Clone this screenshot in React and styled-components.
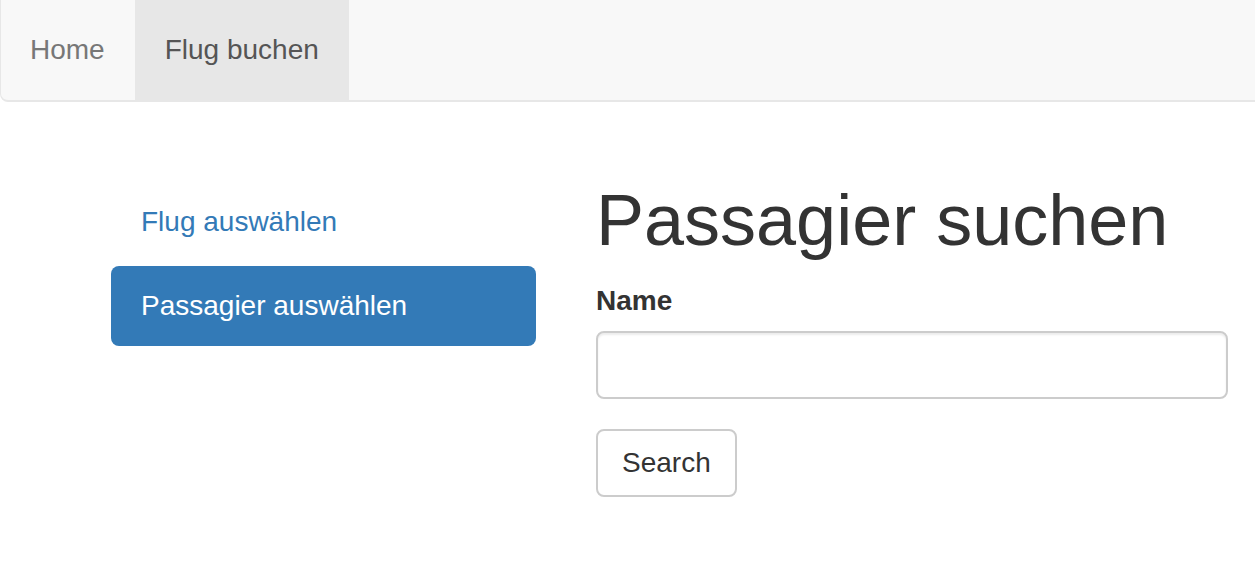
import React from "react";
import styled, { createGlobalStyle } from "styled-components";

const Global = createGlobalStyle`
  html, body { margin: 0; padding: 0; background: #fff; overflow-x: hidden; }
  body {
    font-family: "Liberation Sans", Arial, Helvetica, sans-serif;
    font-size: 28px;
    line-height: 40px;
    color: #333;
  }
  * { box-sizing: border-box; }
`;

const Navbar = styled.nav`
  display: flex;
  height: 102px;
  width: calc(100% + 12px);
  background: #f8f8f8;
  border: 2px solid #e7e7e7;
  border-top: none;
  border-left-width: 1px;
  border-radius: 0 0 8px 8px;
  margin-bottom: 40px;
`;

const NavItem = styled.a`
  display: block;
  padding: 30px 30px 30px;
  line-height: 40px;
  font-size: 28px;
  text-decoration: none;
  color: ${(p) => (p.$active ? "#555" : "#777")};
  background: ${(p) => (p.$active ? "#e7e7e7" : "transparent")};
  &:first-child { padding-left: 29px; padding-right: 30px; }
`;

const Layout = styled.div`
  display: grid;
  grid-template-columns: 425px 632px;
  column-gap: 60px;
  padding-left: 111px;
  padding-top: 39px;
  align-items: start;
`;

const Pills = styled.ul`
  list-style: none;
  margin: 0;
  padding: 0;
  display: flex;
  flex-direction: column;
  gap: 4px;
  padding-top: 1px;
`;

const Pill = styled.li`
  display: block;
  padding: 20px 30px;
  line-height: 40px;
  font-size: 28px;
  border-radius: 8px;
  color: ${(p) => (p.$active ? "#fff" : "#337ab7")};
  background: ${(p) => (p.$active ? "#337ab7" : "transparent")};
`;

const Main = styled.div`
  display: flex;
  flex-direction: column;
`;

const Title = styled.h1`
  margin: 0 0 21px;
  font-size: 72px;
  font-weight: 500;
  line-height: 79px;
  color: #333;
`;

const Label = styled.label`
  display: block;
  font-weight: 700;
  margin-bottom: 10px;
  line-height: 40px;
`;

const Input = styled.input`
  display: block;
  width: 100%;
  height: 68px;
  padding: 12px 24px;
  font-family: inherit;
  font-size: 28px;
  border: 2px solid #ccc;
  border-radius: 8px;
  box-shadow: inset 0 2px 2px rgba(0, 0, 0, 0.075);
  margin-bottom: 30px;
  outline: none;
`;

const Button = styled.button`
  align-self: flex-start;
  height: 68px;
  padding: 12px 24px;
  font-family: inherit;
  font-size: 28px;
  line-height: 40px;
  color: #333;
  background: #fff;
  border: 2px solid #ccc;
  border-radius: 8px;
`;

export default function App() {
  return (
    <>
      <Global />
      <Navbar>
        <NavItem>Home</NavItem>
        <NavItem $active>Flug buchen</NavItem>
      </Navbar>
      <Layout>
        <Pills>
          <Pill>Flug auswählen</Pill>
          <Pill $active>Passagier auswählen</Pill>
        </Pills>
        <Main>
          <Title>Passagier suchen</Title>
          <Label>Name</Label>
          <Input type="text" />
          <Button>Search</Button>
        </Main>
      </Layout>
    </>
  );
}
